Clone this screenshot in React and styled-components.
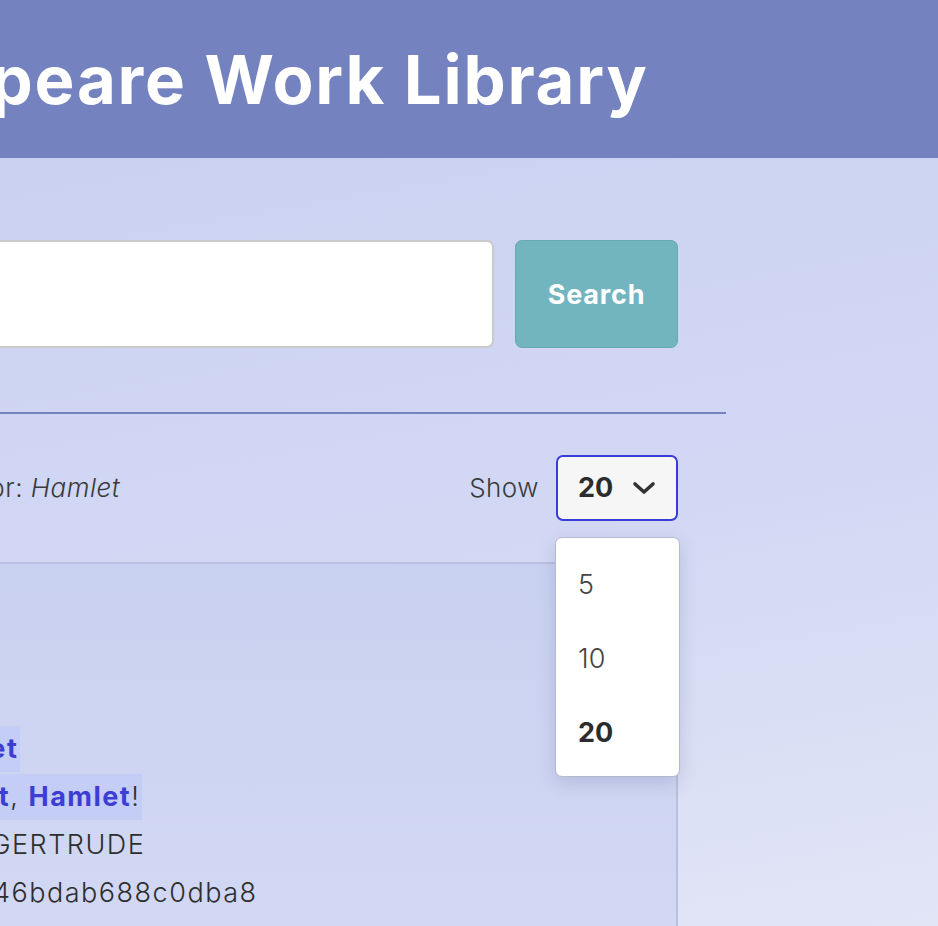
import React, { useState } from 'react';
import styled, { createGlobalStyle } from 'styled-components';

const GlobalStyle = createGlobalStyle`
  html, body {
    margin: 0;
    padding: 0;
    overflow: hidden;
  }
  body {
    min-height: 100vh;
    font-family: 'Inter', 'Noto Sans', sans-serif;
    color: #333;
    background: linear-gradient(170deg, #c8d0f0 0%, #d2d8f4 55%, #e3e6f6 100%);
  }
`;

const results = [
  {
    id: '5f8a9c2e46bdab688c0dba8',
    play: 'Hamlet',
    speaker: 'QUEEN GERTRUDE',
    line: ['Hamlet', ', ', 'Hamlet', '!'],
  },
];

const App = () => {
  const [limit, setLimit] = useState(20);
  const [open, setOpen] = useState(true);

  return (
    <>
      <GlobalStyle />
      <Page>
        <Header>
          <Title>Shakespeare Work Library</Title>
        </Header>

        <Main>
          <SearchRow>
            <SearchInput type="text" defaultValue="" />
            <SearchButton>Search</SearchButton>
          </SearchRow>

          <Divider />

          <Toolbar>
            <Summary>
              Showing {limit} results for: <em>Hamlet</em>
            </Summary>
            <ShowWrap>
              <ShowLabel>Show</ShowLabel>
              <SelectWrap>
                <SelectBox onClick={() => setOpen(!open)}>
                  <span>{limit}</span>
                  <svg width="24" height="14" viewBox="0 0 24 14">
                    <polyline
                      points="3,3 12,11 21,3"
                      fill="none"
                      stroke="#333"
                      strokeWidth="3.6"
                      strokeLinecap="round"
                      strokeLinejoin="round"
                    />
                  </svg>
                </SelectBox>
                {open && (
                  <Menu>
                    {[5, 10, 20].map((n) => (
                      <MenuItem
                        key={n}
                        active={n === limit}
                        onClick={() => {
                          setLimit(n);
                          setOpen(false);
                        }}
                      >
                        {n}
                      </MenuItem>
                    ))}
                  </Menu>
                )}
              </SelectWrap>
            </ShowWrap>
          </Toolbar>

          <ResultBox>
            {results.map((r) => (
              <Result key={r.id}>
                <Line>
                  <Mark>
                    Play Name: <Hit>{r.play}</Hit>
                  </Mark>
                </Line>
                <Line>
                  <Mark>
                    Text entry:{' '}
                    {r.line.map((part, i) =>
                      part === 'Hamlet' ? <Hit key={i}>{part}</Hit> : part
                    )}
                  </Mark>
                </Line>
                <Line>Speaker: {r.speaker}</Line>
                <Line>Doc ID: {r.id}</Line>
              </Result>
            ))}
          </ResultBox>
        </Main>
      </Page>
    </>
  );
};

export default App;

const Page = styled.div`
  width: 1466px;
  margin-left: -528px;
`;

const Header = styled.header`
  display: flex;
  align-items: center;
  justify-content: center;
  height: 158px;
  background-color: #7482bf;
`;

const Title = styled.h1`
  margin: 0 21px 0 0;
  font-size: 67px;
  font-weight: 700;
  letter-spacing: 1.8px;
  color: #fff;
  white-space: nowrap;
`;

const Main = styled.main`
  width: 1042px;
  margin: 0 auto;
`;

const SearchRow = styled.div`
  display: flex;
  gap: 21px;
  margin-top: 82px;
  padding: 0 48px;
`;

const SearchInput = styled.input`
  flex: 1;
  height: 108px;
  box-sizing: border-box;
  border: 2px solid #cacaca;
  border-radius: 7px;
  background: #fff;
  font-size: 27px;
  font-family: inherit;
`;

const SearchButton = styled.button`
  width: 163px;
  height: 108px;
  border: 1px solid #6aa9b4;
  border-radius: 7px;
  background-color: #72b5bf;
  color: #fff;
  font-family: inherit;
  font-size: 27px;
  font-weight: 700;
  letter-spacing: 0.8px;
  cursor: pointer;
`;

const Divider = styled.hr`
  margin: 64px 0 0;
  border: none;
  height: 2px;
  background-color: #7482bf;
`;

const Toolbar = styled.div`
  display: flex;
  justify-content: space-between;
  align-items: center;
  margin-top: 41px;
  padding: 0 48px;
  height: 65px;
`;

const Summary = styled.p`
  margin: 0;
  font-size: 26px;
  font-weight: 300;
  letter-spacing: 0.5px;
  color: #3a3a3a;
  em {
    font-style: italic;
  }
`;

const ShowWrap = styled.div`
  display: flex;
  align-items: center;
  gap: 17px;
`;

const ShowLabel = styled.span`
  font-size: 26px;
  font-weight: 300;
  letter-spacing: 0.5px;
  color: #3a3a3a;
`;

const SelectWrap = styled.div`
  position: relative;
`;

const SelectBox = styled.div`
  display: flex;
  align-items: center;
  justify-content: space-between;
  box-sizing: border-box;
  width: 122px;
  height: 66px;
  padding: 0 20px 0 20px;
  border: 2px solid #3b3bd9;
  border-radius: 7px;
  background-color: #f6f6f7;
  font-size: 27px;
  font-weight: 700;
  color: #2c2c2c;
  cursor: pointer;
`;

const Menu = styled.ul`
  position: absolute;
  top: 82px;
  right: -2px;
  z-index: 2;
  box-sizing: border-box;
  width: 125px;
  margin: 0;
  padding: 10px 0 6px;
  list-style: none;
  border: 1px solid #b5b9cf;
  border-radius: 7px;
  background-color: #fff;
  box-shadow: 0 6px 18px rgba(60, 70, 120, 0.18);
`;

const MenuItem = styled.li`
  height: 74px;
  line-height: 74px;
  padding-left: 22px;
  font-size: 27px;
  font-weight: ${(props) => (props.active ? 700 : 300)};
  color: ${(props) => (props.active ? '#2c2c2c' : '#444')};
  cursor: pointer;
`;

const ResultBox = styled.section`
  margin: 42px 48px 0;
  min-height: 400px;
  border-top: 2px solid #b8bfe0;
  border-right: 2px solid #b8bfe0;
  background: linear-gradient(180deg, #c9d1f0 0%, #d3d9f4 100%);
`;

const Result = styled.article`
  padding: 162px 12px 20px 17px;
`;

const Line = styled.div`
  height: 46px;
  margin-bottom: 2px;
  line-height: 46px;
  font-size: 27px;
  font-weight: 300;
  letter-spacing: 1.5px;
  color: #2e2e2e;
  white-space: nowrap;
`;

const Mark = styled.span`
  display: inline-block;
  padding-right: 2px;
  background-color: #c3cdf5;
`;

const Hit = styled.strong`
  font-weight: 700;
  color: #3d3dd6;
`;
